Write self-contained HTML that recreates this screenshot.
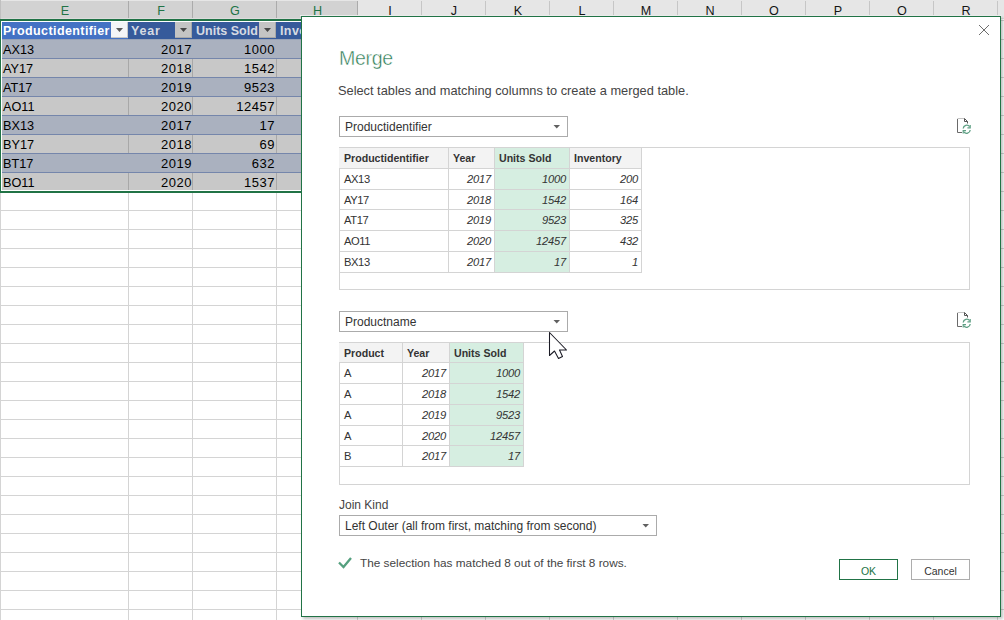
<!DOCTYPE html>
<html><head><meta charset="utf-8">
<style>
*{box-sizing:border-box;margin:0;padding:0}
html,body{width:1004px;height:620px;overflow:hidden;background:#fff;position:relative;font-family:"Liberation Sans",sans-serif}
.a{position:absolute}
.t{position:absolute;white-space:nowrap;line-height:1}
</style></head><body>
<div class="a" style="left:0;top:0;width:1004px;height:19px;background:#e6e6e6"></div>
<div class="a" style="left:0;top:1px;width:357px;height:17px;background:#d2d2d2"></div>
<div class="a" style="left:0;top:18px;width:1004px;height:1px;background:#dcdcdc"></div>
<div class="t" style="left:1px;width:128px;top:5px;font-size:12.6px;text-align:center;color:#217346">E</div>
<div class="a" style="left:128px;top:1px;width:1px;height:17px;background:#ababab"></div>
<div class="t" style="left:129px;width:64px;top:5px;font-size:12.6px;text-align:center;color:#217346">F</div>
<div class="a" style="left:192px;top:1px;width:1px;height:17px;background:#ababab"></div>
<div class="t" style="left:193px;width:84px;top:5px;font-size:12.6px;text-align:center;color:#217346">G</div>
<div class="a" style="left:276px;top:1px;width:1px;height:17px;background:#ababab"></div>
<div class="t" style="left:277px;width:81px;top:5px;font-size:12.6px;text-align:center;color:#217346">H</div>
<div class="a" style="left:357px;top:1px;width:1px;height:17px;background:#ababab"></div>
<div class="t" style="left:358px;width:64px;top:5px;font-size:12.6px;text-align:center;color:#151515">I</div>
<div class="a" style="left:421px;top:1px;width:1px;height:17px;background:#c6c6c6"></div>
<div class="t" style="left:422px;width:64px;top:5px;font-size:12.6px;text-align:center;color:#151515">J</div>
<div class="a" style="left:485px;top:1px;width:1px;height:17px;background:#c6c6c6"></div>
<div class="t" style="left:486px;width:64px;top:5px;font-size:12.6px;text-align:center;color:#151515">K</div>
<div class="a" style="left:549px;top:1px;width:1px;height:17px;background:#c6c6c6"></div>
<div class="t" style="left:550px;width:64px;top:5px;font-size:12.6px;text-align:center;color:#151515">L</div>
<div class="a" style="left:613px;top:1px;width:1px;height:17px;background:#c6c6c6"></div>
<div class="t" style="left:614px;width:64px;top:5px;font-size:12.6px;text-align:center;color:#151515">M</div>
<div class="a" style="left:677px;top:1px;width:1px;height:17px;background:#c6c6c6"></div>
<div class="t" style="left:678px;width:64px;top:5px;font-size:12.6px;text-align:center;color:#151515">N</div>
<div class="a" style="left:741px;top:1px;width:1px;height:17px;background:#c6c6c6"></div>
<div class="t" style="left:742px;width:64px;top:5px;font-size:12.6px;text-align:center;color:#151515">O</div>
<div class="a" style="left:805px;top:1px;width:1px;height:17px;background:#c6c6c6"></div>
<div class="t" style="left:806px;width:64px;top:5px;font-size:12.6px;text-align:center;color:#151515">P</div>
<div class="a" style="left:869px;top:1px;width:1px;height:17px;background:#c6c6c6"></div>
<div class="t" style="left:870px;width:64px;top:5px;font-size:12.6px;text-align:center;color:#151515">Q</div>
<div class="a" style="left:933px;top:1px;width:1px;height:17px;background:#c6c6c6"></div>
<div class="t" style="left:934px;width:64px;top:5px;font-size:12.6px;text-align:center;color:#151515">R</div>
<div class="a" style="left:997px;top:1px;width:1px;height:17px;background:#c6c6c6"></div>
<div class="t" style="left:998px;width:64px;top:5px;font-size:12.6px;text-align:center;color:#151515">S</div>
<div class="a" style="left:1061px;top:1px;width:1px;height:17px;background:#c6c6c6"></div>
<div class="a" style="left:0;top:0;width:1px;height:19px;background:#c0c0c0"></div>
<div class="a" style="left:0;top:19px;width:1px;height:601px;background:#d4d4d4"></div>
<div class="a" style="left:0;top:20px;width:1004px;height:1px;background:#d4d4d4"></div>
<div class="a" style="left:0;top:39px;width:1004px;height:1px;background:#d4d4d4"></div>
<div class="a" style="left:0;top:58px;width:1004px;height:1px;background:#d4d4d4"></div>
<div class="a" style="left:0;top:77px;width:1004px;height:1px;background:#d4d4d4"></div>
<div class="a" style="left:0;top:96px;width:1004px;height:1px;background:#d4d4d4"></div>
<div class="a" style="left:0;top:115px;width:1004px;height:1px;background:#d4d4d4"></div>
<div class="a" style="left:0;top:134px;width:1004px;height:1px;background:#d4d4d4"></div>
<div class="a" style="left:0;top:153px;width:1004px;height:1px;background:#d4d4d4"></div>
<div class="a" style="left:0;top:172px;width:1004px;height:1px;background:#d4d4d4"></div>
<div class="a" style="left:0;top:191px;width:1004px;height:1px;background:#d4d4d4"></div>
<div class="a" style="left:0;top:210px;width:1004px;height:1px;background:#d4d4d4"></div>
<div class="a" style="left:0;top:229px;width:1004px;height:1px;background:#d4d4d4"></div>
<div class="a" style="left:0;top:248px;width:1004px;height:1px;background:#d4d4d4"></div>
<div class="a" style="left:0;top:267px;width:1004px;height:1px;background:#d4d4d4"></div>
<div class="a" style="left:0;top:286px;width:1004px;height:1px;background:#d4d4d4"></div>
<div class="a" style="left:0;top:305px;width:1004px;height:1px;background:#d4d4d4"></div>
<div class="a" style="left:0;top:324px;width:1004px;height:1px;background:#d4d4d4"></div>
<div class="a" style="left:0;top:343px;width:1004px;height:1px;background:#d4d4d4"></div>
<div class="a" style="left:0;top:362px;width:1004px;height:1px;background:#d4d4d4"></div>
<div class="a" style="left:0;top:381px;width:1004px;height:1px;background:#d4d4d4"></div>
<div class="a" style="left:0;top:400px;width:1004px;height:1px;background:#d4d4d4"></div>
<div class="a" style="left:0;top:419px;width:1004px;height:1px;background:#d4d4d4"></div>
<div class="a" style="left:0;top:438px;width:1004px;height:1px;background:#d4d4d4"></div>
<div class="a" style="left:0;top:457px;width:1004px;height:1px;background:#d4d4d4"></div>
<div class="a" style="left:0;top:476px;width:1004px;height:1px;background:#d4d4d4"></div>
<div class="a" style="left:0;top:495px;width:1004px;height:1px;background:#d4d4d4"></div>
<div class="a" style="left:0;top:514px;width:1004px;height:1px;background:#d4d4d4"></div>
<div class="a" style="left:0;top:533px;width:1004px;height:1px;background:#d4d4d4"></div>
<div class="a" style="left:0;top:552px;width:1004px;height:1px;background:#d4d4d4"></div>
<div class="a" style="left:0;top:571px;width:1004px;height:1px;background:#d4d4d4"></div>
<div class="a" style="left:0;top:590px;width:1004px;height:1px;background:#d4d4d4"></div>
<div class="a" style="left:0;top:609px;width:1004px;height:1px;background:#d4d4d4"></div>
<div class="a" style="left:128px;top:19px;width:1px;height:601px;background:#d4d4d4"></div>
<div class="a" style="left:192px;top:19px;width:1px;height:601px;background:#d4d4d4"></div>
<div class="a" style="left:276px;top:19px;width:1px;height:601px;background:#d4d4d4"></div>
<div class="a" style="left:357px;top:19px;width:1px;height:601px;background:#d4d4d4"></div>
<div class="a" style="left:421px;top:19px;width:1px;height:601px;background:#d4d4d4"></div>
<div class="a" style="left:485px;top:19px;width:1px;height:601px;background:#d4d4d4"></div>
<div class="a" style="left:549px;top:19px;width:1px;height:601px;background:#d4d4d4"></div>
<div class="a" style="left:613px;top:19px;width:1px;height:601px;background:#d4d4d4"></div>
<div class="a" style="left:677px;top:19px;width:1px;height:601px;background:#d4d4d4"></div>
<div class="a" style="left:741px;top:19px;width:1px;height:601px;background:#d4d4d4"></div>
<div class="a" style="left:805px;top:19px;width:1px;height:601px;background:#d4d4d4"></div>
<div class="a" style="left:869px;top:19px;width:1px;height:601px;background:#d4d4d4"></div>
<div class="a" style="left:933px;top:19px;width:1px;height:601px;background:#d4d4d4"></div>
<div class="a" style="left:997px;top:19px;width:1px;height:601px;background:#d4d4d4"></div>
<div class="a" style="left:1061px;top:19px;width:1px;height:601px;background:#d4d4d4"></div>
<div class="a" style="left:2px;top:22px;width:355px;height:17px;background:#365a9b"></div>
<div class="a" style="left:2px;top:22px;width:126px;height:17px;background:#4472c4"></div>
<div class="a" style="left:2px;top:39px;width:355px;height:1px;background:#98a2b6"></div>
<div class="a" style="left:2px;top:40px;width:355px;height:18px;background:#aab1bf"></div>
<div class="t" style="left:3px;top:44px;font-size:12.7px;color:#000">AX13</div>
<div class="t" style="right:812px;top:43px;font-size:13px;letter-spacing:0.5px;color:#000">2017</div>
<div class="t" style="right:729px;top:43px;font-size:13px;letter-spacing:0.5px;color:#000">1000</div>
<div class="a" style="left:2px;top:58px;width:355px;height:1px;background:#7586ab"></div>
<div class="a" style="left:2px;top:59px;width:355px;height:18px;background:#c8c8c8"></div>
<div class="a" style="left:128px;top:59px;width:1px;height:18px;background:#a8a8a8"></div>
<div class="a" style="left:192px;top:59px;width:1px;height:18px;background:#a8a8a8"></div>
<div class="a" style="left:276px;top:59px;width:1px;height:18px;background:#a8a8a8"></div>
<div class="t" style="left:3px;top:63px;font-size:12.7px;color:#000">AY17</div>
<div class="t" style="right:812px;top:62px;font-size:13px;letter-spacing:0.5px;color:#000">2018</div>
<div class="t" style="right:729px;top:62px;font-size:13px;letter-spacing:0.5px;color:#000">1542</div>
<div class="a" style="left:2px;top:77px;width:355px;height:1px;background:#7586ab"></div>
<div class="a" style="left:2px;top:78px;width:355px;height:18px;background:#aab1bf"></div>
<div class="t" style="left:3px;top:82px;font-size:12.7px;color:#000">AT17</div>
<div class="t" style="right:812px;top:81px;font-size:13px;letter-spacing:0.5px;color:#000">2019</div>
<div class="t" style="right:729px;top:81px;font-size:13px;letter-spacing:0.5px;color:#000">9523</div>
<div class="a" style="left:2px;top:96px;width:355px;height:1px;background:#7586ab"></div>
<div class="a" style="left:2px;top:97px;width:355px;height:18px;background:#c8c8c8"></div>
<div class="a" style="left:128px;top:97px;width:1px;height:18px;background:#a8a8a8"></div>
<div class="a" style="left:192px;top:97px;width:1px;height:18px;background:#a8a8a8"></div>
<div class="a" style="left:276px;top:97px;width:1px;height:18px;background:#a8a8a8"></div>
<div class="t" style="left:3px;top:101px;font-size:12.7px;color:#000">AO11</div>
<div class="t" style="right:812px;top:100px;font-size:13px;letter-spacing:0.5px;color:#000">2020</div>
<div class="t" style="right:729px;top:100px;font-size:13px;letter-spacing:0.5px;color:#000">12457</div>
<div class="a" style="left:2px;top:115px;width:355px;height:1px;background:#7586ab"></div>
<div class="a" style="left:2px;top:116px;width:355px;height:18px;background:#aab1bf"></div>
<div class="t" style="left:3px;top:120px;font-size:12.7px;color:#000">BX13</div>
<div class="t" style="right:812px;top:119px;font-size:13px;letter-spacing:0.5px;color:#000">2017</div>
<div class="t" style="right:729px;top:119px;font-size:13px;letter-spacing:0.5px;color:#000">17</div>
<div class="a" style="left:2px;top:134px;width:355px;height:1px;background:#7586ab"></div>
<div class="a" style="left:2px;top:135px;width:355px;height:18px;background:#c8c8c8"></div>
<div class="a" style="left:128px;top:135px;width:1px;height:18px;background:#a8a8a8"></div>
<div class="a" style="left:192px;top:135px;width:1px;height:18px;background:#a8a8a8"></div>
<div class="a" style="left:276px;top:135px;width:1px;height:18px;background:#a8a8a8"></div>
<div class="t" style="left:3px;top:139px;font-size:12.7px;color:#000">BY17</div>
<div class="t" style="right:812px;top:138px;font-size:13px;letter-spacing:0.5px;color:#000">2018</div>
<div class="t" style="right:729px;top:138px;font-size:13px;letter-spacing:0.5px;color:#000">69</div>
<div class="a" style="left:2px;top:153px;width:355px;height:1px;background:#7586ab"></div>
<div class="a" style="left:2px;top:154px;width:355px;height:18px;background:#aab1bf"></div>
<div class="t" style="left:3px;top:158px;font-size:12.7px;color:#000">BT17</div>
<div class="t" style="right:812px;top:157px;font-size:13px;letter-spacing:0.5px;color:#000">2019</div>
<div class="t" style="right:729px;top:157px;font-size:13px;letter-spacing:0.5px;color:#000">632</div>
<div class="a" style="left:2px;top:172px;width:355px;height:1px;background:#7586ab"></div>
<div class="a" style="left:2px;top:173px;width:355px;height:18px;background:#c8c8c8"></div>
<div class="a" style="left:128px;top:173px;width:1px;height:18px;background:#a8a8a8"></div>
<div class="a" style="left:192px;top:173px;width:1px;height:18px;background:#a8a8a8"></div>
<div class="a" style="left:276px;top:173px;width:1px;height:18px;background:#a8a8a8"></div>
<div class="t" style="left:3px;top:177px;font-size:12.7px;color:#000">BO11</div>
<div class="t" style="right:812px;top:176px;font-size:13px;letter-spacing:0.5px;color:#000">2020</div>
<div class="t" style="right:729px;top:176px;font-size:13px;letter-spacing:0.5px;color:#000">1537</div>
<div class="t" style="left:3px;top:25px;font-size:12.5px;font-weight:bold;letter-spacing:0.4px;color:#fff">Productidentifier</div>
<div class="t" style="left:131px;top:25px;font-size:12.5px;font-weight:bold;letter-spacing:0.8px;color:#d6dae2">Year</div>
<div class="t" style="left:196px;top:25px;font-size:12.5px;font-weight:bold;letter-spacing:0px;color:#d6dae2">Units Sold</div>
<div class="t" style="left:280px;top:25px;font-size:12.5px;font-weight:bold;letter-spacing:0.4px;color:#d6dae2">Inventory</div>
<div class="a" style="left:111px;top:22px;width:17px;height:16px;background:#f4f5f7;border-right:1px solid #c8c8c8;border-bottom:1px solid #c8c8c8"></div>
<svg class="a" style="left:111px;top:22px" width="17" height="16"><path d="M5 6h7l-3.5 4z" fill="#5a5a5a"/></svg>
<div class="a" style="left:175px;top:22px;width:17px;height:16px;background:#c4c4c4;border-right:1px solid #a8a8a8;border-bottom:1px solid #a8a8a8"></div>
<svg class="a" style="left:175px;top:22px" width="17" height="16"><path d="M5 6h7l-3.5 4z" fill="#474747"/></svg>
<div class="a" style="left:259px;top:22px;width:17px;height:16px;background:#c4c4c4;border-right:1px solid #a8a8a8;border-bottom:1px solid #a8a8a8"></div>
<svg class="a" style="left:259px;top:22px" width="17" height="16"><path d="M5 6h7l-3.5 4z" fill="#474747"/></svg>
<div class="a" style="left:0;top:19px;width:359px;height:174px;border:2px solid #217346;border-left-width:1px"></div>
<div class="a" style="left:1px;top:21px;width:356px;height:1px;background:#fff"></div>
<div class="a" style="left:1px;top:21px;width:1px;height:169px;background:#fff"></div>
<div class="a" style="left:1px;top:190px;width:356px;height:1px;background:#fff"></div>
<div class="a" style="left:300px;top:15px;width:702px;height:1px;background:#eeeeee"></div>
<div class="a" style="left:301px;top:16px;width:700px;height:601px;border:1px solid #217346;background:#fff;box-shadow:2px 2px 3px rgba(0,0,0,0.25)"></div>
<svg class="a" style="left:975px;top:21px" width="18" height="18"><path d="M4 4L14 14M14 4L4 14" stroke="#6e6e6e" stroke-width="1"/></svg>
<div class="t" style="left:339px;top:49px;font-size:19.6px;letter-spacing:-0.35px;color:#2a7a52;-webkit-text-stroke:0.45px #fff">Merge</div>
<div class="t" style="left:338px;top:85px;font-size:12.8px;color:#444">Select tables and matching columns to create a merged table.</div>
<div class="a" style="left:339px;top:116px;width:229px;height:21px;border:1px solid #ababab;background:#fff"></div>
<div class="t" style="left:345px;top:121px;font-size:12px;color:#333">Productidentifier</div>
<svg class="a" style="left:553px;top:124px" width="8" height="6"><path d="M0.5 1h6.5l-3.25 3.5z" fill="#606060"/></svg>
<svg class="a" style="left:957px;top:118px" width="16" height="18"><path d="M0.5 0.5H7.5" fill="none" stroke="#c4c4c4" stroke-width="1"/><path d="M0.5 1V14.5H5" fill="none" stroke="#6a6a6a" stroke-width="1"/><path d="M7.5 0.5L10.5 3.5V5.5M7.5 0.5V3.5H10.5" fill="none" stroke="#555" stroke-width="1"/><path d="M6.2 10.5A3.6 3.6 0 0 1 12.6 8.6" fill="none" stroke="#5e9f84" stroke-width="1.3"/><path d="M13.2 7V9.8H10.4" fill="none" stroke="#5e9f84" stroke-width="1.2"/><path d="M13.2 12A3.6 3.6 0 0 1 6.8 13.9" fill="none" stroke="#5e9f84" stroke-width="1.3"/><path d="M6.2 15.5V12.7H9" fill="none" stroke="#5e9f84" stroke-width="1.2"/></svg>
<div class="a" style="left:339px;top:147px;width:631px;height:143px;border:1px solid #d4d4d4"></div>
<div class="a" style="left:339px;top:148px;width:109px;height:20px;background:#f3f3f3"></div>
<div class="a" style="left:448px;top:148px;width:46px;height:20px;background:#f3f3f3"></div>
<div class="a" style="left:494px;top:148px;width:75px;height:124px;background:#d6eee1"></div>
<div class="a" style="left:569px;top:148px;width:72px;height:20px;background:#f3f3f3"></div>
<div class="a" style="left:339px;top:168px;width:303px;height:1px;background:#d4d4d4"></div>
<div class="a" style="left:339px;top:189px;width:303px;height:1px;background:#d4d4d4"></div>
<div class="a" style="left:339px;top:209px;width:303px;height:1px;background:#d4d4d4"></div>
<div class="a" style="left:339px;top:230px;width:303px;height:1px;background:#d4d4d4"></div>
<div class="a" style="left:339px;top:251px;width:303px;height:1px;background:#d4d4d4"></div>
<div class="a" style="left:339px;top:272px;width:303px;height:1px;background:#d4d4d4"></div>
<div class="a" style="left:448px;top:147px;width:1px;height:126px;background:#d4d4d4"></div>
<div class="a" style="left:494px;top:147px;width:1px;height:126px;background:#d4d4d4"></div>
<div class="a" style="left:569px;top:147px;width:1px;height:126px;background:#d4d4d4"></div>
<div class="a" style="left:641px;top:147px;width:1px;height:126px;background:#d4d4d4"></div>
<div class="t" style="left:344px;top:153px;font-size:10.6px;font-weight:bold;color:#333">Productidentifier</div>
<div class="t" style="left:453px;top:153px;font-size:10.6px;font-weight:bold;color:#333">Year</div>
<div class="t" style="left:499px;top:153px;font-size:10.6px;font-weight:bold;color:#333">Units Sold</div>
<div class="t" style="left:574px;top:153px;font-size:10.6px;font-weight:bold;color:#333">Inventory</div>
<div class="t" style="left:344px;top:174px;font-size:11.2px;letter-spacing:-0.4px;color:#333">AX13</div>
<div class="t" style="right:513px;top:174px;font-size:11.2px;letter-spacing:-0.2px;font-style:italic;color:#333">2017</div>
<div class="t" style="right:438px;top:174px;font-size:11.2px;letter-spacing:-0.2px;font-style:italic;color:#333">1000</div>
<div class="t" style="right:366px;top:174px;font-size:11.2px;letter-spacing:-0.2px;font-style:italic;color:#333">200</div>
<div class="t" style="left:344px;top:195px;font-size:11.2px;letter-spacing:-0.4px;color:#333">AY17</div>
<div class="t" style="right:513px;top:195px;font-size:11.2px;letter-spacing:-0.2px;font-style:italic;color:#333">2018</div>
<div class="t" style="right:438px;top:195px;font-size:11.2px;letter-spacing:-0.2px;font-style:italic;color:#333">1542</div>
<div class="t" style="right:366px;top:195px;font-size:11.2px;letter-spacing:-0.2px;font-style:italic;color:#333">164</div>
<div class="t" style="left:344px;top:215px;font-size:11.2px;letter-spacing:-0.4px;color:#333">AT17</div>
<div class="t" style="right:513px;top:215px;font-size:11.2px;letter-spacing:-0.2px;font-style:italic;color:#333">2019</div>
<div class="t" style="right:438px;top:215px;font-size:11.2px;letter-spacing:-0.2px;font-style:italic;color:#333">9523</div>
<div class="t" style="right:366px;top:215px;font-size:11.2px;letter-spacing:-0.2px;font-style:italic;color:#333">325</div>
<div class="t" style="left:344px;top:236px;font-size:11.2px;letter-spacing:-0.4px;color:#333">AO11</div>
<div class="t" style="right:513px;top:236px;font-size:11.2px;letter-spacing:-0.2px;font-style:italic;color:#333">2020</div>
<div class="t" style="right:438px;top:236px;font-size:11.2px;letter-spacing:-0.2px;font-style:italic;color:#333">12457</div>
<div class="t" style="right:366px;top:236px;font-size:11.2px;letter-spacing:-0.2px;font-style:italic;color:#333">432</div>
<div class="t" style="left:344px;top:257px;font-size:11.2px;letter-spacing:-0.4px;color:#333">BX13</div>
<div class="t" style="right:513px;top:257px;font-size:11.2px;letter-spacing:-0.2px;font-style:italic;color:#333">2017</div>
<div class="t" style="right:438px;top:257px;font-size:11.2px;letter-spacing:-0.2px;font-style:italic;color:#333">17</div>
<div class="t" style="right:366px;top:257px;font-size:11.2px;letter-spacing:-0.2px;font-style:italic;color:#333">1</div>
<div class="a" style="left:339px;top:311px;width:229px;height:21px;border:1px solid #ababab;background:#fff"></div>
<div class="t" style="left:345px;top:316px;font-size:12px;color:#333">Productname</div>
<svg class="a" style="left:553px;top:319px" width="8" height="6"><path d="M0.5 1h6.5l-3.25 3.5z" fill="#606060"/></svg>
<svg class="a" style="left:957px;top:312px" width="16" height="18"><path d="M0.5 0.5H7.5" fill="none" stroke="#c4c4c4" stroke-width="1"/><path d="M0.5 1V14.5H5" fill="none" stroke="#6a6a6a" stroke-width="1"/><path d="M7.5 0.5L10.5 3.5V5.5M7.5 0.5V3.5H10.5" fill="none" stroke="#555" stroke-width="1"/><path d="M6.2 10.5A3.6 3.6 0 0 1 12.6 8.6" fill="none" stroke="#5e9f84" stroke-width="1.3"/><path d="M13.2 7V9.8H10.4" fill="none" stroke="#5e9f84" stroke-width="1.2"/><path d="M13.2 12A3.6 3.6 0 0 1 6.8 13.9" fill="none" stroke="#5e9f84" stroke-width="1.3"/><path d="M6.2 15.5V12.7H9" fill="none" stroke="#5e9f84" stroke-width="1.2"/></svg>
<div class="a" style="left:339px;top:342px;width:631px;height:143px;border:1px solid #d4d4d4"></div>
<div class="a" style="left:339px;top:343px;width:63px;height:19px;background:#f3f3f3"></div>
<div class="a" style="left:402px;top:343px;width:47px;height:19px;background:#f3f3f3"></div>
<div class="a" style="left:449px;top:343px;width:74px;height:123px;background:#d6eee1"></div>
<div class="a" style="left:339px;top:362px;width:185px;height:1px;background:#d4d4d4"></div>
<div class="a" style="left:339px;top:383px;width:185px;height:1px;background:#d4d4d4"></div>
<div class="a" style="left:339px;top:404px;width:185px;height:1px;background:#d4d4d4"></div>
<div class="a" style="left:339px;top:425px;width:185px;height:1px;background:#d4d4d4"></div>
<div class="a" style="left:339px;top:445px;width:185px;height:1px;background:#d4d4d4"></div>
<div class="a" style="left:339px;top:466px;width:185px;height:1px;background:#d4d4d4"></div>
<div class="a" style="left:402px;top:342px;width:1px;height:125px;background:#d4d4d4"></div>
<div class="a" style="left:449px;top:342px;width:1px;height:125px;background:#d4d4d4"></div>
<div class="a" style="left:523px;top:342px;width:1px;height:125px;background:#d4d4d4"></div>
<div class="t" style="left:344px;top:348px;font-size:10.6px;font-weight:bold;color:#333">Product</div>
<div class="t" style="left:407px;top:348px;font-size:10.6px;font-weight:bold;color:#333">Year</div>
<div class="t" style="left:454px;top:348px;font-size:10.6px;font-weight:bold;color:#333">Units Sold</div>
<div class="t" style="left:344px;top:368px;font-size:11.2px;letter-spacing:-0.4px;color:#333">A</div>
<div class="t" style="right:558px;top:368px;font-size:11.2px;letter-spacing:-0.2px;font-style:italic;color:#333">2017</div>
<div class="t" style="right:484px;top:368px;font-size:11.2px;letter-spacing:-0.2px;font-style:italic;color:#333">1000</div>
<div class="t" style="left:344px;top:389px;font-size:11.2px;letter-spacing:-0.4px;color:#333">A</div>
<div class="t" style="right:558px;top:389px;font-size:11.2px;letter-spacing:-0.2px;font-style:italic;color:#333">2018</div>
<div class="t" style="right:484px;top:389px;font-size:11.2px;letter-spacing:-0.2px;font-style:italic;color:#333">1542</div>
<div class="t" style="left:344px;top:410px;font-size:11.2px;letter-spacing:-0.4px;color:#333">A</div>
<div class="t" style="right:558px;top:410px;font-size:11.2px;letter-spacing:-0.2px;font-style:italic;color:#333">2019</div>
<div class="t" style="right:484px;top:410px;font-size:11.2px;letter-spacing:-0.2px;font-style:italic;color:#333">9523</div>
<div class="t" style="left:344px;top:431px;font-size:11.2px;letter-spacing:-0.4px;color:#333">A</div>
<div class="t" style="right:558px;top:431px;font-size:11.2px;letter-spacing:-0.2px;font-style:italic;color:#333">2020</div>
<div class="t" style="right:484px;top:431px;font-size:11.2px;letter-spacing:-0.2px;font-style:italic;color:#333">12457</div>
<div class="t" style="left:344px;top:451px;font-size:11.2px;letter-spacing:-0.4px;color:#333">B</div>
<div class="t" style="right:558px;top:451px;font-size:11.2px;letter-spacing:-0.2px;font-style:italic;color:#333">2017</div>
<div class="t" style="right:484px;top:451px;font-size:11.2px;letter-spacing:-0.2px;font-style:italic;color:#333">17</div>
<div class="t" style="left:339px;top:499px;font-size:12px;color:#444">Join Kind</div>
<div class="a" style="left:339px;top:515px;width:318px;height:21px;border:1px solid #ababab;background:#fff"></div>
<div class="t" style="left:345px;top:520px;font-size:12px;color:#333">Left Outer (all from first, matching from second)</div>
<svg class="a" style="left:642px;top:523px" width="8" height="6"><path d="M0.5 1h6.5l-3.25 3.5z" fill="#606060"/></svg>
<svg class="a" style="left:336px;top:554px" width="18" height="16"><path d="M3 8.5L7.5 13L15 4" fill="none" stroke="#55a07f" stroke-width="2.3"/></svg>
<div class="t" style="left:360px;top:558px;font-size:11.8px;color:#444">The selection has matched 8 out of the first 8 rows.</div>
<div class="a" style="left:839px;top:559px;width:59px;height:21px;border:1px solid #217346"></div>
<div class="t" style="left:839px;width:59px;top:566px;text-align:center;font-size:10.5px;color:#217346">OK</div>
<div class="a" style="left:911px;top:559px;width:59px;height:21px;border:1px solid #adadad"></div>
<div class="t" style="left:911px;width:59px;top:566px;text-align:center;font-size:10.5px;color:#333">Cancel</div>
<svg class="a" style="left:545px;top:328px" width="26" height="34"><path d="M4.5 4.5V27.5L9.5 23L13.5 30.5L17.5 28.5L14.5 22H21.5Z" fill="#fff" stroke="#1a1a24" stroke-width="1.05" stroke-linejoin="round"/></svg>
</body></html>
